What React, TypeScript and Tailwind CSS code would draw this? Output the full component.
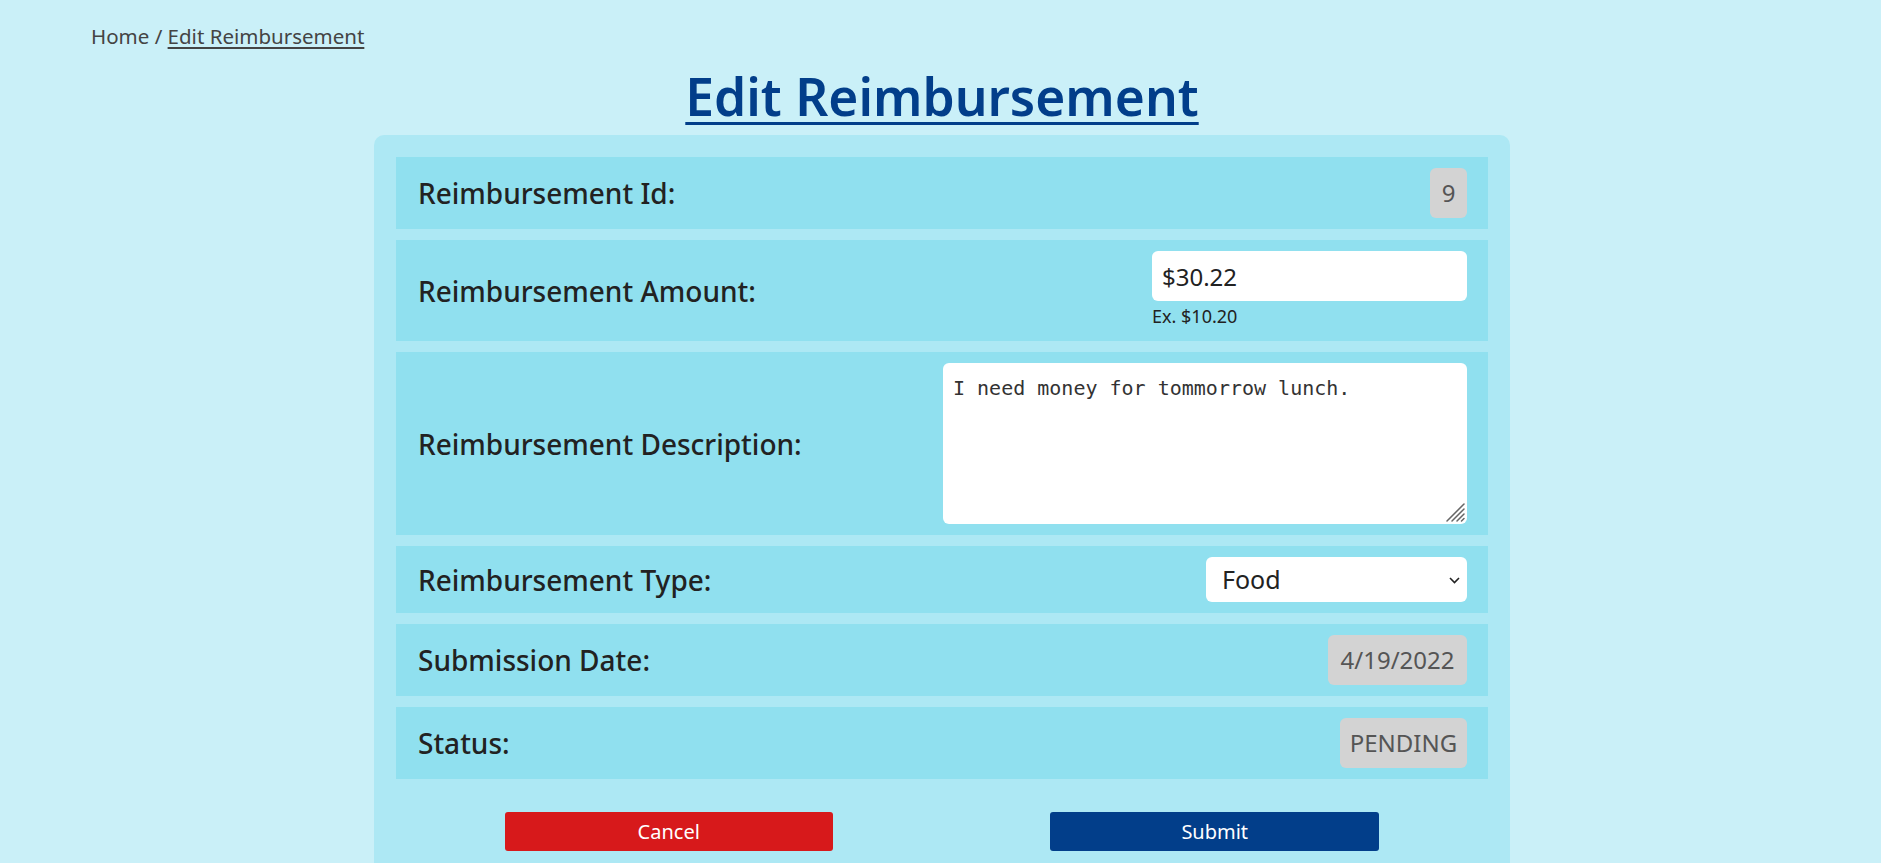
import type { ReactNode } from 'react'

const font = { fontFamily: '"Noto Sans", "Open Sans", sans-serif' }

function Row({ label, children }: { label: string; children: ReactNode }) {
  return (
    <div className="flex items-center justify-between bg-[#90e0ef] py-[11px] pl-[22px] pr-[21px]">
      <span className="text-[28px] leading-none font-medium text-[#222]">{label}</span>
      {children}
    </div>
  )
}

function ReadOnly({ value, width }: { value: string; width: string }) {
  return (
    <div className={`flex h-[50px] items-center justify-center rounded-[6px] bg-[#d3d3d3] text-[24px] text-[#555] ${width}`}>
      {value}
    </div>
  )
}

export default function App() {
  return (
    <div className="min-h-screen bg-[#caf0f8]" style={font}>
      <nav className="pl-[91px] pt-[21px] text-[20.5px] leading-[30px] text-[#444]">
        Home / <span className="underline underline-offset-[3px]">Edit Reimbursement</span>
      </nav>

      <div className="pl-[3px]">
        <h1 className="mt-[13px] text-center text-[51.5px] leading-[64px] font-semibold text-[#023e8a] underline decoration-[3px] underline-offset-[6px]">
          Edit Reimbursement
        </h1>

        <form className="mx-auto mt-[7px] w-[1136px] rounded-[10px] bg-[#ade8f4] p-[22px] pb-[40px]">
          <div className="flex flex-col gap-[11px]">
            <Row label="Reimbursement Id:">
              <ReadOnly value="9" width="w-[37px]" />
            </Row>

            <Row label="Reimbursement Amount:">
              <div className="flex w-[315px] flex-col">
                <input
                  defaultValue="$30.22"
                  className="h-[50px] rounded-[6px] bg-white pl-[10px] text-[24px] text-[#222] outline-none"
                />
                <span className="mt-[2px] text-[18px] leading-[27px] text-[#222]">Ex. $10.20</span>
              </div>
            </Row>

            <Row label="Reimbursement Description:">
              <div className="relative">
                <textarea
                  defaultValue="I need money for tommorrow lunch."
                  className="block h-[161px] w-[524px] resize-none rounded-[6px] bg-white p-[10px] text-[20px] text-[#333] outline-none"
                  style={{ fontFamily: '"DejaVu Sans Mono", monospace' }}
                />
                {/* resize grip */}
                <svg className="pointer-events-none absolute right-[2px] bottom-[2px] h-[20px] w-[20px]" viewBox="0 0 20 20">
                  <g stroke="#666" strokeWidth="1.5" strokeLinecap="round">
                    <line x1="2" y1="19" x2="19" y2="2" />
                    <line x1="7" y1="19" x2="19" y2="7" />
                    <line x1="12" y1="19" x2="19" y2="12" />
                    <line x1="16.5" y1="19" x2="19" y2="16.5" />
                  </g>
                </svg>
              </div>
            </Row>

            <Row label="Reimbursement Type:">
              <div className="relative">
                <select
                  defaultValue="Food"
                  className="block h-[45px] w-[261px] appearance-none rounded-[6px] bg-white pl-[16px] pr-[30px] text-[25px] text-[#222] outline-none"
                >
                  <option>Food</option>
                  <option>Lodging</option>
                  <option>Travel</option>
                  <option>Other</option>
                </select>
                <svg
                  className="pointer-events-none absolute top-1/2 right-[7px] h-[8px] w-[11px] -translate-y-1/2"
                  viewBox="0 0 11 8"
                  fill="none"
                  stroke="#222"
                  strokeWidth="1.6"
                >
                  <path d="M1 2l4.5 4.5L10 2" />
                </svg>
              </div>
            </Row>

            <Row label="Submission Date:">
              <ReadOnly value="4/19/2022" width="w-[139px]" />
            </Row>

            <Row label="Status:">
              <ReadOnly value="PENDING" width="w-[127px]" />
            </Row>
          </div>

          <div className="mt-[33px] flex justify-around">
            <button type="button" className="h-[39px] w-[328px] rounded-[3px] bg-[#d7191b] text-[20px] text-white">
              Cancel
            </button>
            <button type="button" className="h-[39px] w-[329px] rounded-[3px] bg-[#023e8a] text-[20px] text-white">
              Submit
            </button>
          </div>
        </form>
      </div>
    </div>
  )
}
